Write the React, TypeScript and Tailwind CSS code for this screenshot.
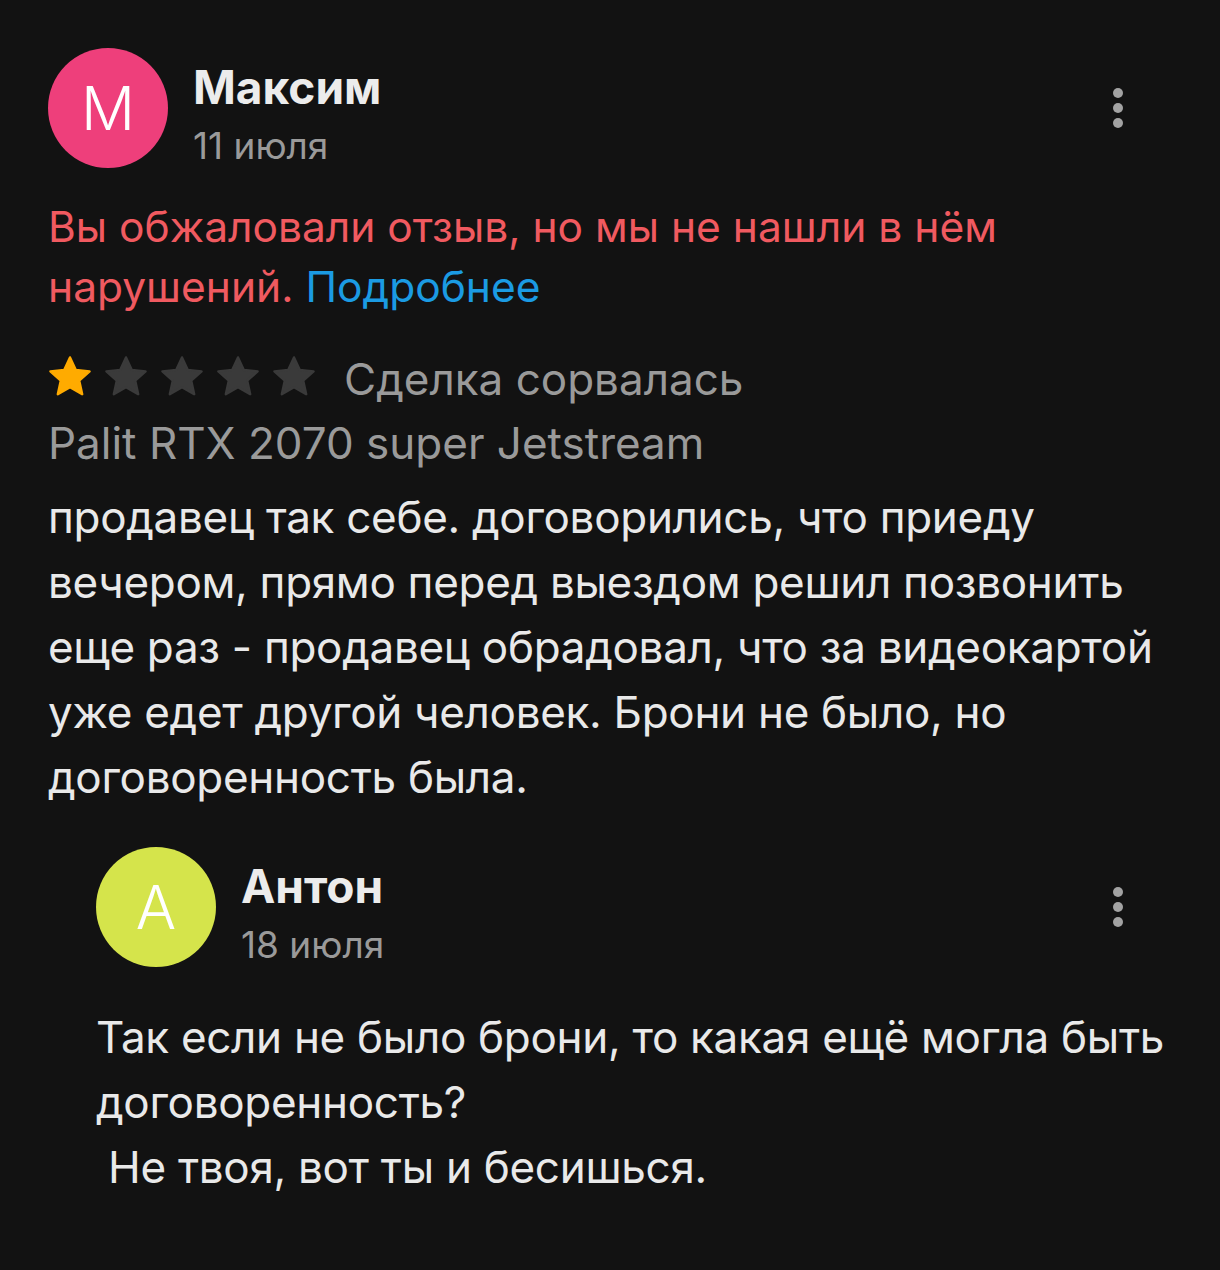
import React from 'react'

const font = { fontFamily: 'Inter, "Noto Sans", sans-serif' }

function Kebab() {
  return (
    <button aria-label="Ещё" className="flex flex-col items-center gap-[5px] w-[40px] mr-[34px]">
      <span className="block w-[10px] h-[10px] rounded-full bg-[#a3a3a3]" />
      <span className="block w-[10px] h-[10px] rounded-full bg-[#a3a3a3]" />
      <span className="block w-[10px] h-[10px] rounded-full bg-[#a3a3a3]" />
    </button>
  )
}

function Star({ filled }: { filled: boolean }) {
  return (
    <svg width="50" height="48" viewBox="0 0 24 24" className="shrink-0 -ml-[3px] mr-[9px] -mt-[8px]">
      <path
        d="M12 2.2l2.9 6.3 6.9.7-5.2 4.6 1.5 6.8L12 17.1l-6.1 3.5 1.5-6.8-5.2-4.6 6.9-.7z"
        fill={filled ? '#ffab00' : '#3a3a3a'}
        stroke={filled ? '#ffab00' : '#3a3a3a'}
        strokeWidth="1.2"
        strokeLinejoin="round"
      />
    </svg>
  )
}

function Header({
  letter,
  color,
  name,
  date,
}: {
  letter: string
  color: string
  name: string
  date: string
}) {
  return (
    <div className="flex items-start">
      <div
        className={`w-[120px] h-[120px] rounded-full flex items-center justify-center text-white text-[60px] font-light shrink-0 ${color}`}
      >
        {letter}
      </div>
      <div className="ml-[25px] flex-1 pt-[14px]">
        <div className="text-[46px] leading-[50px] font-bold text-[#ececec]">{name}</div>
        <div className="text-[37px] leading-[44px] text-[#9a9a9a] mt-[12px]">{date}</div>
      </div>
      <div className="mt-[40px]">
        <Kebab />
      </div>
    </div>
  )
}

export default function App() {
  return (
    <div className="min-h-[1270px] w-[1220px] bg-[#121212] pt-[48px] pl-[48px] pr-[48px]" style={font}>
      <Header letter="M" color="bg-[#ee3f7b]" name="Максим" date="11 июля" />

      <p className="mt-[29px] text-[42.5px] leading-[60px] text-[#f05a60]">
        Вы обжаловали отзыв, но мы не нашли в нём нарушений.{' '}
        <span className="text-[#1b9be3]">Подробнее</span>
      </p>

      <div className="mt-[39px] flex items-center h-[50px]">
        <Star filled />
        <Star filled={false} />
        <Star filled={false} />
        <Star filled={false} />
        <Star filled={false} />
        <span className="ml-[16px] -mt-[4px] text-[44px] leading-[50px] text-[#9a9a9a]">Сделка сорвалась</span>
      </div>

      <div className="mt-[9px] text-[44px] leading-[56px] text-[#9a9a9a]">Palit RTX 2070 super Jetstream</div>

      <p className="mt-[14px] text-[44px] leading-[65px] tracking-[-0.3px] text-[#e9e9e9]">
        продавец так себе. договорились, что приеду вечером, прямо перед выездом решил позвонить еще
        раз - продавец обрадовал, что за видеокартой уже едет другой человек. Брони не было, но
        договоренность была.
      </p>

      <div className="mt-[37px] pl-[48px]">
        <Header letter="A" color="bg-[#d5e44b]" name="Антон" date="18 июля" />
        <p className="mt-[38px] text-[44px] leading-[65px] tracking-[-0.3px] text-[#e9e9e9] whitespace-pre-line">
          {'Так если не было брони, то какая ещё могла быть договоренность?\n\u00a0Не твоя, вот ты и бесишься.'}
        </p>
      </div>
    </div>
  )
}
